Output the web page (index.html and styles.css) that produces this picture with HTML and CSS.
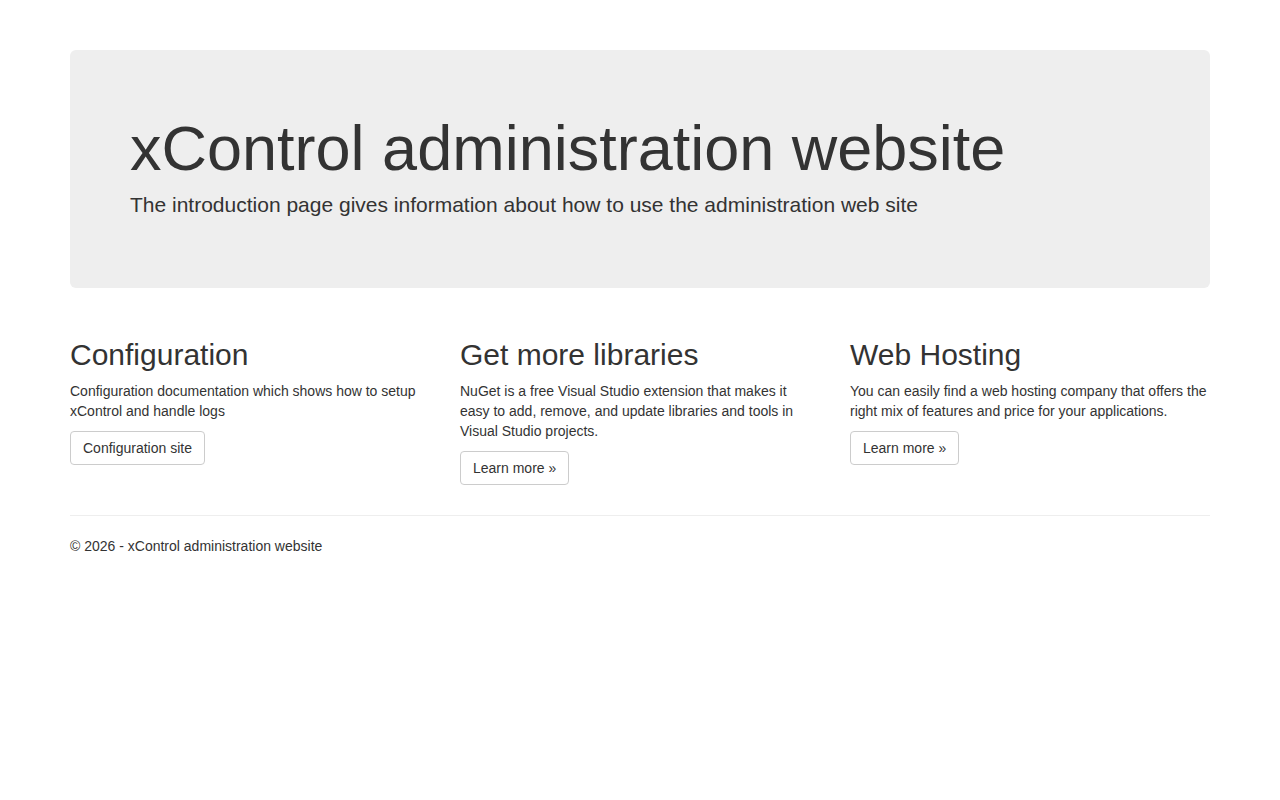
FILE: index.html
```html
<!DOCTYPE html>
<html lang="en">
<head>
    <meta charset="UTF-8">
    <meta name="viewport" content="width=device-width, initial-scale=1.0">
    <title>Home Page - xControl administration website</title>
    <link rel="stylesheet" href="styles.css">
</head>
<body>
    <div class="container body-content">
        <div class="jumbotron">
            <h1>xControl administration website</h1>
            <p class="lead">The introduction page gives information about how to use the administration web site</p>
        </div>

        <div class="row">
            <div class="col">
                <h2>Configuration</h2>
                <p>Configuration documentation which shows how to setup xControl and handle logs</p>
                <p><a class="btn" href="#">Configuration site</a></p>
            </div>
            <div class="col">
                <h2>Get more libraries</h2>
                <p>NuGet is a free Visual Studio extension that makes it easy to add, remove, and update libraries and tools in Visual Studio projects.</p>
                <p><a class="btn" href="#">Learn more &raquo;</a></p>
            </div>
            <div class="col">
                <h2>Web Hosting</h2>
                <p>You can easily find a web hosting company that offers the right mix of features and price for your applications.</p>
                <p><a class="btn" href="#">Learn more &raquo;</a></p>
            </div>
        </div>

        <hr />
        <footer>
            <p>&copy; 2026 - xControl administration website</p>
        </footer>
    </div>
</body>
</html>
```

FILE: styles.css
```css
body {
  margin: 0;
  padding-top: 50px;
  padding-bottom: 20px;
  font-family: "Liberation Sans", Arial, Helvetica, sans-serif;
  font-size: 14px;
  line-height: 1.42857143;
  color: #333;
  background-color: #fff;
}

p {
  margin: 0 0 10px;
}

.container {
  width: 1170px;
  margin: 0 auto;
  padding: 0 15px;
  box-sizing: border-box;
}

.jumbotron {
  padding: 48px 60px;
  margin-bottom: 30px;
  background-color: #eee;
  border-radius: 6px;
}

.jumbotron h1 {
  margin: 16px 0 7px;
  font-size: 63px;
  font-weight: 500;
  line-height: 1.1;
}

.jumbotron p {
  margin-bottom: 20px;
  font-size: 21px;
  font-weight: 200;
  line-height: 1.42857143;
}

.row {
  display: flex;
  margin: 0 -15px;
}

.col {
  width: 33.33333333%;
  padding: 0 15px;
  box-sizing: border-box;
}

h2 {
  margin: 20px 0 10px;
  font-size: 30px;
  font-weight: 500;
  line-height: 1.1;
}

.btn {
  display: inline-block;
  padding: 6px 12px;
  font-size: 14px;
  line-height: 1.42857143;
  color: #333;
  text-decoration: none;
  background-color: #fff;
  border: 1px solid #ccc;
  border-radius: 4px;
}

.btn:hover {
  background-color: #e6e6e6;
  border-color: #adadad;
}

hr {
  margin: 20px 0;
  border: 0;
  border-top: 1px solid #eee;
}
```
